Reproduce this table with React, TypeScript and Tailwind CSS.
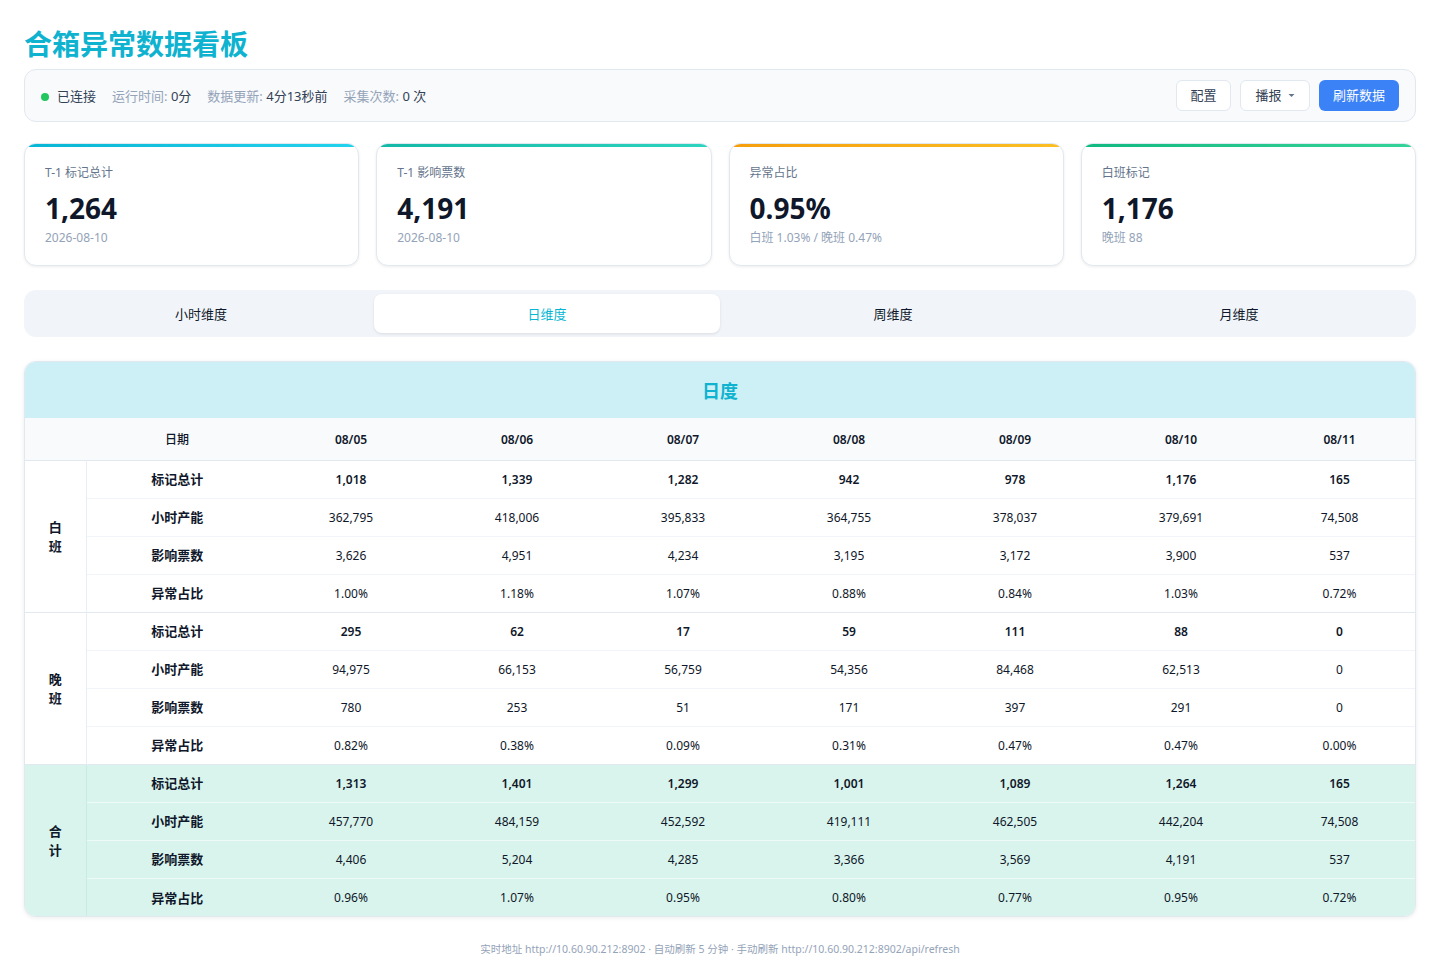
import React from 'react';

const FONT = '"Noto Sans", "Noto Sans CJK SC", sans-serif';

const DATES = ['08/05', '08/06', '08/07', '08/08', '08/09', '08/10', '08/11'];

type Group = { name: string; total?: boolean; rows: { label: string; values: string[] }[] };

const GROUPS: Group[] = [
  {
    name: '白班',
    rows: [
      { label: '标记总计', values: ['1,018', '1,339', '1,282', '942', '978', '1,176', '165'] },
      { label: '小时产能', values: ['362,795', '418,006', '395,833', '364,755', '378,037', '379,691', '74,508'] },
      { label: '影响票数', values: ['3,626', '4,951', '4,234', '3,195', '3,172', '3,900', '537'] },
      { label: '异常占比', values: ['1.00%', '1.18%', '1.07%', '0.88%', '0.84%', '1.03%', '0.72%'] },
    ],
  },
  {
    name: '晚班',
    rows: [
      { label: '标记总计', values: ['295', '62', '17', '59', '111', '88', '0'] },
      { label: '小时产能', values: ['94,975', '66,153', '56,759', '54,356', '84,468', '62,513', '0'] },
      { label: '影响票数', values: ['780', '253', '51', '171', '397', '291', '0'] },
      { label: '异常占比', values: ['0.82%', '0.38%', '0.09%', '0.31%', '0.47%', '0.47%', '0.00%'] },
    ],
  },
  {
    name: '合计',
    total: true,
    rows: [
      { label: '标记总计', values: ['1,313', '1,401', '1,299', '1,001', '1,089', '1,264', '165'] },
      { label: '小时产能', values: ['457,770', '484,159', '452,592', '419,111', '462,505', '442,204', '74,508'] },
      { label: '影响票数', values: ['4,406', '5,204', '4,285', '3,366', '3,569', '4,191', '537'] },
      { label: '异常占比', values: ['0.96%', '1.07%', '0.95%', '0.80%', '0.77%', '0.95%', '0.72%'] },
    ],
  },
];

const CARDS = [
  { label: 'T-1 标记总计', value: '1,264', sub: '2026-08-10', bar: 'bg-gradient-to-r from-[#06b6d4] to-[#22d3ee]' },
  { label: 'T-1 影响票数', value: '4,191', sub: '2026-08-10', bar: 'bg-gradient-to-r from-[#14b8a6] to-[#2dd4bf]' },
  { label: '异常占比', value: '0.95%', sub: '白班 1.03% / 晚班 0.47%', bar: 'bg-gradient-to-r from-[#f59e0b] to-[#fbbf24]' },
  { label: '白班标记', value: '1,176', sub: '晚班 88', bar: 'bg-gradient-to-r from-[#10b981] to-[#34d399]' },
];

const TABS = ['小时维度', '日维度', '周维度', '月维度'];

export default function App() {
  return (
    <div className="min-h-[980px] bg-white px-6 pt-[26px] text-[#1e293b]" style={{ fontFamily: FONT }}>
      <h1 className="text-[28px] font-bold leading-[36px] text-[#0fb3d0]">合箱异常数据看板</h1>

      <div className="mt-[7px] flex h-[53px] items-center justify-between rounded-xl border border-[#e2e8f0] bg-[#f8fafc] pl-4 pr-4">
        <div className="mt-[3px] flex items-center text-[13px]">
          <span className="h-2 w-2 rounded-full bg-[#22c55e]" />
          <span className="ml-2 text-[#334155]">已连接</span>
          <span className="ml-4 text-[#94a3b8]">
            运行时间: <span className="text-[#334155]">0分</span>
          </span>
          <span className="ml-4 text-[#94a3b8]">
            数据更新: <span className="text-[#334155]">4分13秒前</span>
          </span>
          <span className="ml-4 text-[#94a3b8]">
            采集次数: <span className="text-[#334155]">0 次</span>
          </span>
        </div>
        <div className="flex items-center gap-[9px]">
          <button className="h-[31px] w-[55px] rounded-md border border-[#e2e8f0] bg-white text-[13px] text-[#334155]">配置</button>
          <button className="flex h-[31px] w-[70px] items-center justify-center gap-1.5 rounded-md border border-[#e2e8f0] bg-white text-[13px] text-[#334155]">
            播报
            <svg width="7" height="5" viewBox="0 0 7 5">
              <path d="M0.5 1 L3.5 4 L6.5 1 Z" fill="#64748b" />
            </svg>
          </button>
          <button className="h-[31px] w-[80px] rounded-md bg-[#3b82f6] text-[13px] text-white">刷新数据</button>
        </div>
      </div>

      <div className="mt-[21px] grid grid-cols-4 gap-[17px]">
        {CARDS.map((c) => (
          <div
            key={c.label}
            className="relative h-[123px] overflow-hidden rounded-xl border border-[#e2e8f0] bg-white shadow-[0_1px_3px_rgba(15,23,42,0.08)]"
          >
            <div className={`absolute inset-x-0 top-0 h-[3px] ${c.bar}`} />
            <div className="pl-5 pt-[21px]">
              <div className="text-[12px] leading-[16px] text-[#64748b]">{c.label}</div>
              <div className="mt-[11px] text-[28px] font-bold leading-[32px] text-[#0f172a]">{c.value}</div>
              <div className="mt-[6px] text-[12px] leading-[16px] text-[#94a3b8]">{c.sub}</div>
            </div>
          </div>
        ))}
      </div>

      <div className="mt-6 grid h-[47px] grid-cols-4 rounded-xl bg-[#f1f5f9] p-1">
        {TABS.map((t) => (
          <div
            key={t}
            className={
              t === '日维度'
                ? 'flex items-center justify-center rounded-lg bg-white pt-[2px] text-[13px] text-[#06b6d4] shadow-[0_1px_3px_rgba(15,23,42,0.1)]'
                : 'flex items-center justify-center pt-[2px] text-[13px] text-[#0f172a]'
            }
          >
            {t}
          </div>
        ))}
      </div>

      <div className="mt-[24px] overflow-hidden rounded-xl border border-[#e2e8f0] bg-white shadow-[0_1px_4px_rgba(15,23,42,0.08)]">
        <div className="flex h-[56px] items-center justify-center bg-[#cdeff6] pt-[2px] text-[18px] font-bold text-[#0fb3d0]">日度</div>
        <table className="w-full table-fixed border-collapse text-[12px] text-[#0f172a]">
          <colgroup>
            <col className="w-[61px]" />
            <col className="w-[182px]" />
            {DATES.slice(0, 6).map((d) => (
              <col key={d} className="w-[166px]" />
            ))}
            <col />
          </colgroup>
          <thead>
            <tr className="h-[42px] border-b border-[#e2e8f0] bg-[#f8fafc]">
              <th />
              <th className="pt-[2px] font-medium">日期</th>
              {DATES.map((d) => (
                <th key={d} className="pt-[2px] font-semibold">
                  {d}
                </th>
              ))}
            </tr>
          </thead>
          <tbody>
            {GROUPS.map((g, gi) =>
              g.rows.map((r, ri) => (
                <tr
                  key={g.name + r.label}
                  className={[
                    'h-[38px]',
                    g.total ? 'bg-[#d9f4ec]' : 'bg-white',
                    ri === g.rows.length - 1 && gi < GROUPS.length - 1
                      ? 'border-b border-[#e2e8f0]'
                      : ri < g.rows.length - 1
                        ? g.total
                          ? 'border-b border-[#eefaf6]'
                          : 'border-b border-[#f1f5f9]'
                        : '',
                  ].join(' ')}
                >
                  {ri === 0 && (
                    <td
                      rowSpan={g.rows.length}
                      className={`border-r ${g.total ? 'border-[#c9ece0]' : 'border-[#e8eef5]'} pt-[2px] text-center text-[13px] font-bold leading-[19px]`}
                    >
                      {g.name.split('').map((ch) => (
                        <div key={ch}>{ch}</div>
                      ))}
                    </td>
                  )}
                  <td className="pt-[2px] text-center text-[13px] font-bold">{r.label}</td>
                  {r.values.map((v, vi) => (
                    <td key={vi} className={`pt-[2px] text-center ${ri === 0 ? 'font-semibold' : ''}`}>
                      {v}
                    </td>
                  ))}
                </tr>
              )),
            )}
          </tbody>
        </table>
      </div>

      <div className="pt-[25px] pb-4 text-center text-[10.5px] text-[#94a3b8]">
        实时地址 http://10.60.90.212:8902 · 自动刷新 5 分钟 · 手动刷新 http://10.60.90.212:8902/api/refresh
      </div>
    </div>
  );
}
